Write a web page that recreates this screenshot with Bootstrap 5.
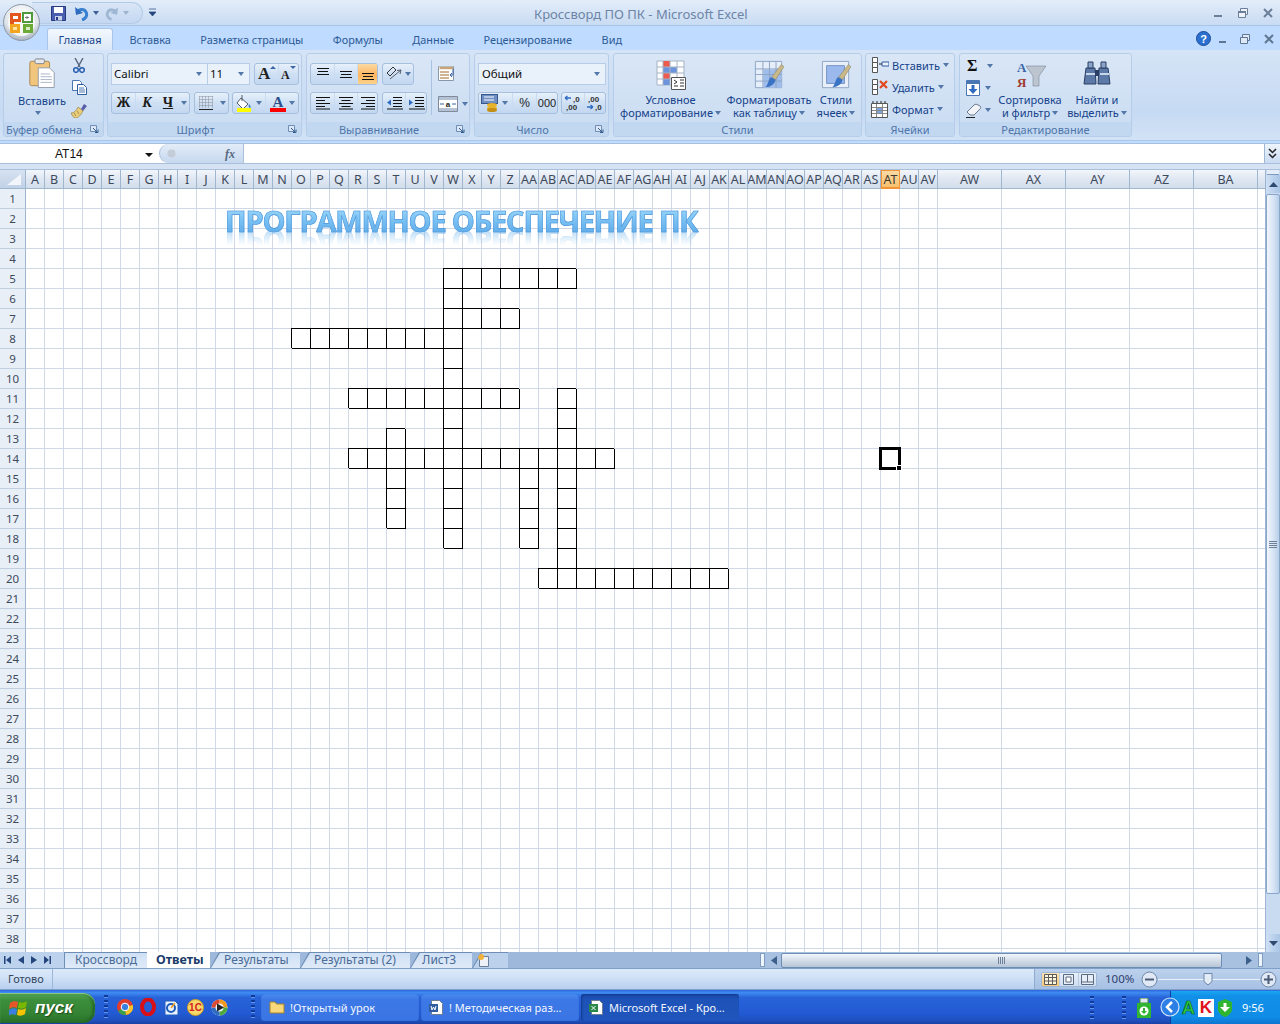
<!doctype html>
<html lang="ru">
<head>
<meta charset="utf-8">
<title>Кроссворд ПО ПК - Microsoft Excel</title>
<link href="https://cdn.jsdelivr.net/npm/bootstrap@5.3.0/dist/css/bootstrap.min.css" rel="stylesheet">
<style>
html,body{margin:0;height:1024px;overflow:hidden}
body{font:11px/13px "Noto Sans",sans-serif;color:#15428b;background:#bfdbff}
svg{display:block;flex:none}
.xl-app{width:1280px;height:1024px}
/* title */
.xl-title{height:26px;background:linear-gradient(#e3edfa,#d3e2f5 60%,#c9dcf3);border-bottom:1px solid #a9c5e8;padding-left:60px}
.qat{position:absolute;left:32px;top:2px;width:111px;height:22px;border:1px solid #b4cbe8;border-left:0;border-radius:0 12px 12px 0;background:linear-gradient(#d9e6f7,#c4d8f1)}
.xl-caption{position:absolute;left:534px;top:6px;color:#6c84a6;font-size:13px;line-height:16px;white-space:nowrap}
.win-c{position:absolute;left:1212px;top:7px;gap:13px;width:68px}
.win-d{position:absolute;left:1196px;top:5px}
.off-btn{position:absolute;left:3px;top:4px;width:37px;height:37px;z-index:5}
/* tabs */
.xl-tabs{height:24px;background:#bfdbff;gap:29.500px;padding-left:47px;padding-top:2px;font-size:10.9px}
.rtab{line-height:24px;height:22px;color:#2c5a96;white-space:nowrap}
.rtab-on{width:66px;margin-right:-13px;text-align:center;background:linear-gradient(#f3f8fe,#dbe8f7);border:1px solid #a9c5e8;border-bottom:0;border-radius:3px 3px 0 0;line-height:22px;color:#15428b}
/* ribbon */
.xl-ribbon{height:91px;background:linear-gradient(#d5e4f6,#c6daf3 70%,#d3e3f6);border-bottom:1px solid #a9c5e8;padding-top:3px}
.rg{height:84px;border:1px solid #b5cde9;border-radius:3px;background:linear-gradient(#d9e6f6,#c9dcf2);overflow:hidden;flex:none}
.rb{height:68px}
.rl{height:15px;line-height:15px;background:#c1d8f0;color:#4f75aa;text-align:center;position:relative;white-space:nowrap}
.rl-o{padding-right:18px}
.launch{position:absolute;right:4px;top:3px}
.g1{margin-left:3px;width:101px}.g2{margin-left:3px;width:195px}.g3{margin-left:4px;width:164px}.g4{margin-left:4px;width:135px}.g5{margin-left:4px;width:249px}.g6{margin-left:3px;width:90px}.g7{margin-left:4px;width:173px}
.tri{width:0;height:0;border:3px solid transparent;border-top:4px solid #5377a8;border-bottom:0;display:inline-block;flex:none}
.paste{width:62px;padding-left:11px;padding-top:4px}
.paste .lbl{margin-top:6px;margin-left:3px;white-space:nowrap}
.mini{margin-left:5px;padding-top:4px;gap:7px}
.rows{padding:9px 0 0 3px;gap:7px}
.rw{height:22px}
.combo{height:22px;background:#e9f1fb;border:1px solid #b6cce7;color:#111;font-size:11.5px;padding:0 5px 1px 2px}
.bgp{height:22px;border:1px solid #a6bfdd;border-radius:3px;background:linear-gradient(#e7f0fb,#cfe0f4 50%,#c2d7f0)}
.bgp>div{height:20px;border-left:1px solid #c9dbf0}
.bgp>div:first-child{border-left:0}
.b-on{background:linear-gradient(#fbd9a1,#fdb55f 55%,#fcd38c)}
.sepv{width:1px;height:55px;background:#a9c2df;margin:6px 6px 0 4px}
.big{padding-top:6px;text-align:center;white-space:nowrap}
.big .ic{height:30px;margin-bottom:3px}
.cl{padding:0 0 0 5px}
.cl>div{height:22px;gap:3px;white-space:nowrap}
.ed{padding:1px 0 0 6px;width:37px}
.ed>div{height:22px;gap:5px}
/* formula */
.xl-formula{height:21px;margin-top:2px;background:#fff;border-top:1px solid #a9c0dd;border-bottom:1px solid #a9c0dd}
.fname{width:159px;font:12px/19px "Liberation Sans",sans-serif;color:#111;padding:2px 6px 0 55px}
.fcap{width:85px;height:19px;background:linear-gradient(#e3ecf8,#c6d8ef);border:1px solid #a9c0dd;border-width:0 1px;border-radius:10px 0 0 10px;padding:0 8px 0 7px}
.fx{font:italic 700 12px/18px "Liberation Serif",serif;color:#56687e}
.fexp{width:16px;height:19px;background:linear-gradient(#eef4fc,#c9dbf2);border-left:1px solid #9eb6d3;color:#222}
.xl-gap{height:6px;background:#d4e2f4;border-bottom:1px solid #a9c0dd}
/* sheet */
.xl-sheet{height:782px}
.grid-wrap{width:1265px;position:relative;overflow:hidden;background:#fff}
.sgrid{display:grid;grid-template-columns:26px repeat(48,19px) repeat(5,64px) 8px;grid-template-rows:19px repeat(39,20px)}
.sgrid>div{box-sizing:border-box;min-width:0}
.cc{border-right:1px solid #d0d7e5;border-bottom:1px solid #d0d7e5}
.cb{border-right:1px solid #000;border-bottom:1px solid #000;box-shadow:-1px -1px 0 0 #000}
.hc,.hr{display:flex;align-items:center;justify-content:center;overflow:hidden;white-space:nowrap;color:#3d4a5c;font-size:12.5px;line-height:1}
.hr{font-size:11.5px}
.hc{background:linear-gradient(#f3f6fb,#dfe7f2 50%,#d3deec);border-right:1px solid #9eb6ce;border-bottom:1px solid #9eb6ce;padding-top:2px}
.hc span{flex:none}
.hr{background:#e9eff7;border-right:1px solid #9eb6ce;border-bottom:1px solid #c1cfe0}
.hc-on{background:linear-gradient(#f9dba6,#f6c06d);border:1px solid #f29536;border-bottom:2px solid #f29536;color:#3d3a30}
.corner{background:linear-gradient(#d7e2f1,#c1d1e6);border-right:1px solid #9eb6ce;border-bottom:1px solid #9eb6ce;position:relative}
.sel{position:relative}
.sel::before{content:"";position:absolute;left:-2px;top:-2px;right:-2px;bottom:-2px;border:3px solid #000}
.sel::after{content:"";position:absolute;right:-3px;bottom:-3px;width:6px;height:6px;background:#000;border:1px solid #fff}
.wa{position:absolute;left:225px;top:35px;font:700 29px/32px "Open Sans",sans-serif;letter-spacing:-1.19px;white-space:nowrap;color:transparent;background:linear-gradient(#a4dafa,#7cc3f4 45%,#58a6e6);-webkit-background-clip:text;background-clip:text;-webkit-text-stroke:.6px #4f97db;-webkit-box-reflect:below -12px linear-gradient(transparent 35%,rgba(255,255,255,.6))}
.vs{width:15px;background:#c9dbf1;border-left:1px solid #9eb6d3}
.vs-split{height:5px;background:#e4edf8;border-bottom:1px solid #7f9cc0;margin:0 1px}
.vs-btn{height:18px;background:linear-gradient(90deg,#cfe0f4,#a9c4e6)}
.vs-th{height:700px;border:1px solid #8aa6c9;border-radius:2px;background:linear-gradient(90deg,#f1f6fc,#d3e2f4 60%,#b8cfe9);margin-top:1px}
/* bottom tabs */
.xl-bar{height:16px;background:#9db8da;position:relative}
.tnav{width:64px;height:16px;background:#bdd2ec;gap:7px;padding-left:4px}
.stab{height:16px;line-height:16px;position:relative;isolation:isolate;color:#4a6b96;font-size:12px;white-space:nowrap;padding-left:14px;background:#6e8eb6;clip-path:polygon(0 100%,9px 0,100% 0,100% 100%)}
.stab::before{content:"";position:absolute;inset:1px 0 0 1px;z-index:-1;background:linear-gradient(#cfe0f5,#dfeaf8);clip-path:polygon(0 100%,9px 0,100% 0,100% 100%)}
.st1{width:83px;clip-path:none;padding-left:11px}
.st1::before{clip-path:none}
.st2{width:63px;font-weight:700;font-size:12.5px;color:#1b3b6b;padding-left:9px;clip-path:none;background:#fff}
.st2::before{background:#fff;clip-path:none}
.st3{width:90px}.st4{width:110px}.st5{width:62px;padding-left:12px}.st6{width:36px;padding:0;display:flex;align-items:center}
.st6::before{background:#bcd2ec}
.hs{margin-left:auto;width:520px;height:16px;background:#a9c1e1}
.hs-sp{width:5px;height:14px;background:#eef4fc;border:1px solid #7f9cc0;margin:0 3px 0 0}
.hs-th{width:441px;height:15px;border:1px solid #6d8db5;border-radius:2px;background:linear-gradient(#f1f5fa,#d3dde9 50%,#b7c5d6)}
/* status */
.xl-status{height:22px;background:linear-gradient(#dce9fa,#cfe0f6 45%,#b8d0f0);border-top:1px solid #7fa0c9;border-bottom:1px solid #7fa0c9;color:#34465e;padding-left:8px;line-height:20px}
.st-sep{width:1px;height:20px;background:#9eb8d8;margin-left:8px}
.st-right{margin-left:auto;width:246px;height:20px;background:linear-gradient(#bcd1ec,#a7c1e4);border-left:1px solid #8fabcf;padding-left:6px}
.vbtns{height:15px;width:56px;border:1px solid #9eb7d7;border-radius:2px;background:linear-gradient(#e7eff9,#cfdef1)}
.vbtns>div{flex:1;height:13px;border-left:1px solid #b7cbe3}
.vbtns>div:first-child{border:0;background:linear-gradient(#fbe3b6,#f8c878)}
.zm{width:36px;margin-left:8px;color:#2f3f6e;font-size:11.5px}
.zline{width:102px;height:1px;background:#eaf1fa;position:relative}
.zth{position:absolute;left:45px;top:-6px}
/* taskbar */
.xl-task{height:34px;color:#fff;background:linear-gradient(#2d66dd 0,#3f8cf3 8%,#2863d8 22%,#225ad4 70%,#1e4fbc 90%,#1941a5 100%);position:relative}
.startb{width:95px;height:30px;margin-top:2px;border-radius:0 12px 12px 0;background:linear-gradient(#56a556,#3c8e3c 25%,#338233 70%,#286f28);box-shadow:inset 0 1px 1px #8fce8f,inset -2px 0 3px #1f5f1f;padding-left:9px;gap:6px;font:italic 700 17px/30px "Liberation Sans",sans-serif;text-shadow:1px 1px 1px #1b4d1b}
.grip{width:4px;height:24px;margin:0 7px;background:repeating-linear-gradient(#0f3a9c 0 2px,#5f95ee 2px 3px,transparent 3px 5px)}
.ql{gap:7px;margin-left:2px}
.tb{width:158px;height:27px;margin-right:2px;padding-left:8px;gap:5px;border-radius:3px;background:linear-gradient(#4a8bf2,#3d79e6 20%,#3a75e3);box-shadow:inset 0 0 1px #1d4ab0;white-space:nowrap;overflow:hidden;font-size:11px;color:#f2f6ff}
.tb-on{background:linear-gradient(#1b49a8,#1e52b7 20%,#1f55bd);box-shadow:inset 1px 1px 2px #123a8a}
.tray{position:absolute;left:1170px;top:1px;width:110px;height:33px;background:linear-gradient(#19a6ef,#1290e8 15%,#0f8ce6 80%,#0e74d0);border-left:1px solid #0e3f9c;padding-left:8px;gap:3px}
.tA{font:700 18px/18px "Liberation Sans",sans-serif;color:#2ecc40;-webkit-text-stroke:.7px #0a5a18}
.tK{width:16px;height:18px;background:#fff;font:700 17px/18px "Liberation Sans",sans-serif;color:#e0101c;text-align:center}
.clk{margin-left:6px;font-size:11px;color:#fff}
.abs-usb{position:absolute;left:1136px;top:8px}
.abs-arrow{position:absolute;left:1160px;top:7px;z-index:2}
.g-tb1{position:absolute;left:1090px;top:6px;margin:0}.g-tb2{position:absolute;left:1122px;top:6px;margin:0}
</style>
</head>
<body>
<svg width="0" height="0" style="position:absolute">
 <defs>
  <symbol id="i-launch" viewBox="0 0 9 9"><path d="M.5.5h6v6h-6z" fill="#dbe7f6" stroke="#6f8fb7"/><path d="M3 3l4 4M5 7.500h3v-3" fill="none" stroke="#35598c"/></symbol>
  <symbol id="i-alt" viewBox="0 0 16 16"><path d="M2 2.500h12M3 5.500h10M2 8.500h12" stroke="#111" fill="none"/></symbol>
  <symbol id="i-alm" viewBox="0 0 16 16"><path d="M2 5.500h12M3 8.500h10M2 11.500h12" stroke="#111" fill="none"/></symbol>
  <symbol id="i-alb" viewBox="0 0 16 16"><path d="M2 7.500h12M3 10.500h10M2 13.500h12" stroke="#111" fill="none"/></symbol>
  <symbol id="i-ll" viewBox="0 0 16 14"><path d="M1 1.500h14M1 4.500h9M1 7.500h14M1 10.500h9M1 13h14" stroke="#111" fill="none"/></symbol>
  <symbol id="i-lc" viewBox="0 0 16 14"><path d="M1 1.500h14M3.500 4.500h9M1 7.500h14M3.500 10.500h9M1 13h14" stroke="#111" fill="none"/></symbol>
  <symbol id="i-lr" viewBox="0 0 16 14"><path d="M1 1.500h14M6 4.500h9M1 7.500h14M6 10.500h9M1 13h14" stroke="#111" fill="none"/></symbol>
  <symbol id="i-tblbrush" viewBox="0 0 32 32"><path d="M1.500 1.500h28v28h-28z" fill="#e6eefa" stroke="#8ba3c3"/><path d="M10 10h19.500v19.500H10z" fill="#9fbdec"/><path d="M1.500 9.500h28M1.500 15.500h28M1.500 22.500h28M9.500 1.500v28M16.500 1.500v28M23.500 1.500v28" stroke="#8ba3c3" fill="none"/><path d="M29 5l3 2-9 14-4-3z" fill="#c9b98a" stroke="#857650" stroke-width=".5"/><path d="M18 18l5 3c-1 5-6 8-11 8 3-2 3-8 6-11z" fill="#3b73c4"/></symbol>
  <symbol id="i-cellbrush" viewBox="0 0 32 32"><path d="M1.500 1.500h28v28h-28z" fill="#e8eff9" stroke="#8ba3c3"/><path d="M6 6h19v19H6z" fill="#9bb9ec" stroke="#6f8fc4"/><path d="M29 5l3 2-9 14-4-3z" fill="#c9b98a" stroke="#857650" stroke-width=".5"/><path d="M18 18l5 3c-1 5-6 8-11 8 3-2 3-8 6-11z" fill="#3b73c4"/></symbol>
 </defs>
</svg>

<div class="xl-app d-flex flex-column position-relative">
 <!-- title -->
 <div class="xl-title position-relative flex-none">
  <div class="qat d-flex align-items-center">
   <svg style="margin-left:19px" width="15" height="15" viewBox="0 0 15 15"><path d="M.5.5h14v14H.5z" fill="#4a5fb0" stroke="#27397f"/><path d="M3 1h9v6H3z" fill="#fff"/><path d="M4 10h7v4.500H4z" fill="#c9d4ea"/><path d="M5 11h2v3H5z" fill="#27397f"/></svg>
   <svg style="margin-left:9px" width="14" height="15" viewBox="0 0 14 15"><path d="M2 7c1-4 7-5 9-1 2 4-1 7-4 8" fill="none" stroke="#3a7fd0" stroke-width="3"/><path d="M0 1l1 8 7-2z" fill="#2f6cc0"/></svg>
   <span class="tri" style="margin-left:4px;border-top-color:#3c5f95"></span>
   <svg style="margin-left:6px" width="13" height="15" viewBox="0 0 14 15"><path d="M12 7C11 3 5 2 3 6c-2 4 1 7 4 8" fill="none" stroke="#9fb7d3" stroke-width="3"/><path d="M14 1l-1 8-7-2z" fill="#9fb7d3"/></svg>
   <span class="tri" style="margin-left:5px;border-top-color:#9fb3cd"></span>
  </div>
  <svg style="position:absolute;left:149px;top:8px" width="7" height="9" viewBox="0 0 7 9"><path d="M0 1h7M0 4l3.500 4L7 4z" fill="#24467d" stroke="#24467d" stroke-width=".7"/></svg>
  <div class="xl-caption">Кроссворд ПО ПК - Microsoft Excel</div>
  <div class="win-c d-flex align-items-center">
   <svg width="12" height="12" viewBox="0 0 12 12"><path d="M2 8h8v2H2z" fill="#6b7f99"/></svg>
   <svg width="12" height="12" viewBox="0 0 12 12"><path d="M3.500 1.500h7v6h-7z" fill="#eef3fa" stroke="#6b7f99"/><path d="M1.500 4.500h7v6h-7z" fill="#eef3fa" stroke="#6b7f99"/><path d="M1 4h8v2H1z" fill="#6b7f99"/></svg>
   <svg width="12" height="12" viewBox="0 0 12 12"><path d="M2 2l8 8M10 2l-8 8" stroke="#6b7f99" stroke-width="2"/></svg>
  </div>
 </div>
 <svg class="off-btn" viewBox="0 0 37 37"><defs><radialGradient id="og" cx=".5" cy=".3" r=".8"><stop offset="0" stop-color="#fff"/><stop offset=".6" stop-color="#dfe4ea"/><stop offset="1" stop-color="#8f9aa8"/></radialGradient></defs><circle cx="18.500" cy="18.500" r="18" fill="url(#og)" stroke="#8b97a6"/><circle cx="18.500" cy="18.500" r="13.500" fill="#f5f7f5"/><path d="M7 9h11v9H11v6H7z" fill="#e2571e"/><path d="M10 12h5v3h-5z" fill="#fff"/><path d="M20 9h9v9h-9z" fill="#fff" stroke="#4f9a3a" stroke-width="2"/><path d="M7 20h10v9H7z" fill="#f3a51f"/><path d="M10 23h4v3h-4z" fill="#fbe5a0"/><path d="M20 20h10v9H20z" fill="#6aaa35"/><path d="M23 23h4v3h-4z" fill="#d9eec7"/><path d="M24 12v3M22 13.500h4" stroke="#7a7a7a"/></svg>

 <!-- tabs -->
 <div class="xl-tabs d-flex flex-none position-relative">
  <div class="rtab rtab-on">Главная</div>
  <div class="rtab">Вставка</div>
  <div class="rtab">Разметка страницы</div>
  <div class="rtab">Формулы</div>
  <div class="rtab">Данные</div>
  <div class="rtab">Рецензирование</div>
  <div class="rtab">Вид</div>
  <div class="win-d d-flex align-items-center">
   <svg width="15" height="15" viewBox="0 0 15 15"><circle cx="7.500" cy="7.500" r="7" fill="#2b70d0" stroke="#1a4b9a"/><text x="7.500" y="11.500" text-anchor="middle" font-size="11" font-weight="700" fill="#fff" font-family="Liberation Sans">?</text></svg>
   <svg style="margin-left:6px" width="12" height="12" viewBox="0 0 12 12"><path d="M2 8h7v2H2z" fill="#5f7693"/></svg>
   <svg style="margin-left:10px" width="12" height="12" viewBox="0 0 12 12"><path d="M3.500 1.500h7v6h-7z" fill="#dfe9f6" stroke="#5f7693"/><path d="M1.500 4.500h7v6h-7z" fill="#dfe9f6" stroke="#5f7693"/></svg>
   <svg style="margin-left:12px" width="12" height="12" viewBox="0 0 12 12"><path d="M2 2l8 8M10 2l-8 8" stroke="#5f7693" stroke-width="2"/></svg>
  </div>
 </div>

 <!-- ribbon -->
 <div class="xl-ribbon d-flex flex-none">
  <section class="rg g1">
   <div class="rb d-flex">
    <div class="paste d-flex flex-column">
     <svg style="margin-left:14px" width="26" height="30" viewBox="0 0 27 32"><rect x=".5" y="3.500" width="21" height="26" rx="2" fill="#f1c57c" stroke="#a8864e"/><rect x="6" y="1" width="10" height="5" rx="1.500" fill="#e6e9ee" stroke="#7c818a"/><path d="M9.500 10.500h12l5 5v16h-17z" fill="#fff" stroke="#8f99a8"/><path d="M12 17h10M12 20h12M12 23h12M12 26h12" stroke="#a7b3c4"/></svg>
     <div class="lbl">Вставить</div>
     <span class="tri" style="margin:4px 0 0 20px"></span>
    </div>
    <div class="mini d-flex flex-column align-items-center">
     <svg width="14" height="15" viewBox="0 0 14 15"><path d="M3 0l5 9M11 0L6 9" stroke="#5a6a80" stroke-width="1.500"/><circle cx="4" cy="12" r="2.300" fill="none" stroke="#2a5fb0" stroke-width="1.500"/><circle cx="10" cy="12" r="2.300" fill="none" stroke="#2a5fb0" stroke-width="1.500"/></svg>
     <svg width="15" height="15" viewBox="0 0 15 15"><path d="M.5.500h7l2 2v8h-9z" fill="#fff" stroke="#4a76b4"/><path d="M5.500 4.500h6l3 3v7h-9z" fill="#fff" stroke="#2f5da0"/><path d="M7 8h5M7 10h6M7 12h6" stroke="#4a76b4"/></svg>
     <svg style="margin-top:1px" width="16" height="15" viewBox="0 0 16 15"><path d="M10 6l3-5 3 2-4 5z" fill="#5b5ea8"/><path d="M0 10c3 0 5-2 7-6l5 4c-2 4-5 7-7 7-3 0-4-3-5-5z" fill="#e9cd7a" stroke="#8a7438" stroke-width=".6"/><path d="M3 10l2 3M6 8l2 3" stroke="#8a7438" stroke-width=".7"/></svg>
    </div>
   </div>
   <div class="rl text-start" style="padding-left:2px">Буфер обмена<svg class="launch" width="9" height="9"><use href="#i-launch"/></svg></div>
  </section>

  <section class="rg g2">
   <div class="rb rows d-flex flex-column">
    <div class="rw d-flex">
     <div class="combo d-flex align-items-center justify-content-between" style="width:97px">Calibri<span class="tri"></span></div>
     <div class="combo d-flex align-items-center justify-content-between" style="width:42px;border-left:0">11<span class="tri"></span></div>
     <div class="bgp d-flex" style="margin-left:4px;width:45px">
      <div class="d-flex justify-content-center" style="width:23px"><svg width="18" height="18" viewBox="0 0 18 18"><text x="0" y="15" font-family="Liberation Serif" font-weight="700" font-size="17" fill="#222">A</text><path d="M12 5l3-3 3 3z" fill="#3a66a8"/></svg></div>
      <div class="d-flex justify-content-center" style="flex:1"><svg width="18" height="18" viewBox="0 0 18 18"><text x="1" y="15" font-family="Liberation Serif" font-weight="700" font-size="12" fill="#222">A</text><path d="M10 2l3 3 3-3z" fill="#3a66a8"/></svg></div>
     </div>
    </div>
    <div class="rw d-flex">
     <div class="bgp d-flex align-items-center" style="width:79px;font:700 14px/20px 'Liberation Serif',serif;color:#1a1a1a">
      <div class="d-flex align-items-center justify-content-center" style="width:23px">Ж</div>
      <div class="d-flex align-items-center justify-content-center fst-italic" style="width:23px">К</div>
      <div class="d-flex align-items-center justify-content-center text-decoration-underline" style="width:20px;border:0">Ч</div>
      <div class="d-flex align-items-center justify-content-center" style="flex:1;border:0"><span class="tri"></span></div>
     </div>
     <div class="bgp d-flex align-items-center" style="margin-left:4px;width:35px">
      <div class="d-flex align-items-center justify-content-center" style="width:22px"><svg width="16" height="16" viewBox="0 0 16 16"><path d="M1.500 1.500h13M1.500 4.500h13M1.500 7.500h13M1.500 10.500h13M1.500 1.500v11M4.500 1.500v11M7.500 1.500v11M10.500 1.500v11M14.500 1.500v11" stroke="#8a8f98" stroke-dasharray="1 1" fill="none"/><path d="M1 14.500h14" stroke="#222"/></svg></div>
      <div class="d-flex align-items-center justify-content-center" style="flex:1;border:0"><span class="tri"></span></div>
     </div>
     <div class="bgp d-flex align-items-center" style="margin-left:3px;width:67px">
      <div class="d-flex align-items-center" style="width:32px;gap:3px;padding-left:3px"><svg width="17" height="17" viewBox="0 0 17 17"><path d="M5 3l7 6-5 5-6-6z" fill="#fff" stroke="#555d6b"/><path d="M6 0v6" stroke="#555d6b"/><path d="M13 9c2 2 2 4 1 4s-2-2-1-4z" fill="#3a7fd0"/><path d="M1 13h14v4H1z" fill="#ffff00"/></svg><span class="tri"></span></div>
      <div class="d-flex align-items-center" style="flex:1;gap:3px;padding-left:4px"><svg width="16" height="17" viewBox="0 0 16 17"><text x="8" y="12" text-anchor="middle" font-family="Liberation Serif" font-weight="700" font-size="15" fill="#2b4f8a">A</text><path d="M0 13h16v4H0z" fill="#f00"/></svg><span class="tri"></span></div>
     </div>
    </div>
   </div>
   <div class="rl rl-o">Шрифт<svg class="launch" width="9" height="9"><use href="#i-launch"/></svg></div>
  </section>

  <section class="rg g3">
   <div class="rb d-flex">
    <div class="rows d-flex flex-column" style="width:120px">
     <div class="rw d-flex">
      <div class="bgp d-flex" style="width:68px">
       <div class="d-flex align-items-center justify-content-center" style="width:23px"><svg width="16" height="16"><use href="#i-alt"/></svg></div>
       <div class="d-flex align-items-center justify-content-center" style="width:23px"><svg width="16" height="16"><use href="#i-alm"/></svg></div>
       <div class="d-flex align-items-center justify-content-center b-on" style="flex:1"><svg width="16" height="16"><use href="#i-alb"/></svg></div>
      </div>
      <div class="bgp d-flex align-items-center justify-content-center" style="margin-left:4px;width:32px;gap:2px"><svg width="17" height="17" viewBox="0 0 17 17"><path d="M1 7l6-6 3 3-6 6z" fill="none" stroke="#333"/><path d="M4 13l11-9M15 4l-4 .5M15 4l-1 4" stroke="#555d6b" fill="none"/></svg><span class="tri"></span></div>
     </div>
     <div class="rw d-flex">
      <div class="bgp d-flex" style="width:68px">
       <div class="d-flex align-items-center justify-content-center" style="width:23px"><svg width="16" height="14"><use href="#i-ll"/></svg></div>
       <div class="d-flex align-items-center justify-content-center" style="width:23px"><svg width="16" height="14"><use href="#i-lc"/></svg></div>
       <div class="d-flex align-items-center justify-content-center" style="flex:1"><svg width="16" height="14"><use href="#i-lr"/></svg></div>
      </div>
      <div class="bgp d-flex" style="margin-left:4px;width:45px">
       <div class="d-flex align-items-center justify-content-center" style="width:22px"><svg width="17" height="14" viewBox="0 0 17 14"><path d="M7 1.500h9M7 4.500h9M7 7.500h9M7 10.500h9" stroke="#111"/><path d="M5 3.500L1 6.500l4 3z" fill="#2f6cc0"/><path d="M1 13h16" stroke="#111"/></svg></div>
       <div class="d-flex align-items-center justify-content-center" style="flex:1"><svg width="17" height="14" viewBox="0 0 17 14"><path d="M7 1.500h9M7 4.500h9M7 7.500h9M7 10.500h9" stroke="#111"/><path d="M1 3.500l4 3-4 3z" fill="#2f6cc0"/><path d="M1 13h16" stroke="#111"/></svg></div>
      </div>
     </div>
    </div>
    <div class="sepv"></div>
    <div class="d-flex flex-column" style="padding-top:11px;gap:13px">
     <svg width="18" height="18" viewBox="0 0 18 18"><path d="M.5 1.500h15v14H.5z" fill="#fff" stroke="#8a97a8"/><path d="M1 1.500h14v3H1z" fill="#eadfc8"/><path d="M2 3h13M2 7h9M2 10h9M2 13h9" stroke="#a06a2a"/><path d="M15 4v6h-3M14 8l-2 2 2 2" stroke="#3a66a8" fill="none"/></svg>
     <div class="d-flex align-items-center" style="gap:4px"><svg width="20" height="16" viewBox="0 0 20 16"><path d="M.5 .5h19v15H.5z" fill="#fff" stroke="#7f8b9c"/><path d="M1 1h18v3H1zM1 12h18v3H1z" fill="#b5c2d3"/><text x="10" y="11" text-anchor="middle" font-size="8" font-weight="700" fill="#222" font-family="Liberation Sans">a</text><path d="M2 8h4M18 8h-4" stroke="#3a66a8"/></svg><span class="tri"></span></div>
    </div>
   </div>
   <div class="rl rl-o">Выравнивание<svg class="launch" width="9" height="9"><use href="#i-launch"/></svg></div>
  </section>

  <section class="rg g4">
   <div class="rb rows d-flex flex-column">
    <div class="rw"><div class="combo d-flex align-items-center justify-content-between" style="width:128px;padding-left:3px;font-size:11.5px">Общий<span class="tri"></span></div></div>
    <div class="rw d-flex">
     <div class="bgp d-flex align-items-center" style="width:80px">
      <div class="d-flex align-items-center" style="width:33px;gap:3px;padding-left:2px"><svg width="18" height="18" viewBox="0 0 18 18"><rect x=".5" y=".5" width="16" height="9" fill="#6f8fc4" stroke="#35598c"/><path d="M3 3h10M3 6h10" stroke="#fff"/><ellipse cx="11" cy="11" rx="5" ry="2" fill="#e8b22a"/><ellipse cx="11" cy="14" rx="5" ry="2" fill="#e8b22a"/><ellipse cx="11" cy="16" rx="5" ry="2" fill="#c48f14"/></svg><span class="tri"></span></div>
      <div class="d-flex align-items-center justify-content-center" style="width:24px;font:12px/20px 'Liberation Sans',sans-serif;color:#222">%</div>
      <div class="d-flex align-items-center justify-content-center" style="flex:1;font:11px/20px 'Liberation Sans',sans-serif;color:#222">000</div>
     </div>
     <div class="bgp d-flex align-items-center" style="margin-left:3px;width:45px">
      <div class="d-flex align-items-center justify-content-center" style="width:22px"><svg width="20" height="18" viewBox="0 0 20 18"><path d="M8 4H2M2 4l2.500-2M2 4l2.500 2" stroke="#2f6cc0" fill="none" stroke-width="1.300"/><text x="10" y="8" font-size="8" font-weight="700" fill="#333" font-family="Liberation Sans">,0</text><text x="3" y="16" font-size="8" font-weight="700" fill="#333" font-family="Liberation Sans">,00</text></svg></div>
      <div class="d-flex align-items-center justify-content-center" style="flex:1"><svg width="20" height="18" viewBox="0 0 20 18"><text x="3" y="8" font-size="8" font-weight="700" fill="#333" font-family="Liberation Sans">,00</text><path d="M2 13h6M8 13l-2.500-2M8 13l-2.500 2" stroke="#2f6cc0" fill="none" stroke-width="1.300"/><text x="10" y="16" font-size="8" font-weight="700" fill="#333" font-family="Liberation Sans">,0</text></svg></div>
     </div>
    </div>
   </div>
   <div class="rl rl-o">Число<svg class="launch" width="9" height="9"><use href="#i-launch"/></svg></div>
  </section>

  <section class="rg g5">
   <div class="rb d-flex" style="padding-left:5px">
    <div class="big" style="width:103px">
     <div class="ic d-flex justify-content-center"><svg width="30" height="30" viewBox="0 0 30 30"><path d="M1 1h27v24H1z" fill="#fff" stroke="#a5b2c4"/><path d="M7 1h7v6H7zM7 13h7v6H7z" fill="#ec5b4c"/><path d="M7 7h14v6H7zM7 19h7v6H7z" fill="#6c94dc"/><path d="M1 7h27M1 13h27M1 19h27M7 1v24M14 1v24M21 1v24" stroke="#a5b2c4" fill="none"/><path d="M15.500 17.500h14v12h-14z" fill="#fff" stroke="#555"/><path d="M18 20l3 2-3 2M18 26h4M24 20h4M24 23h4M24 26h4" stroke="#333" fill="none"/></svg></div>
     <div>Условное</div>
     <div class="d-flex align-items-center justify-content-center" style="gap:2px">форматирование<span class="tri"></span></div>
    </div>
    <div class="big" style="width:94px">
     <div class="ic d-flex justify-content-center"><svg width="32" height="30" viewBox="0 0 32 32"><use href="#i-tblbrush"/></svg></div>
     <div>Форматировать</div>
     <div class="d-flex align-items-center justify-content-center" style="gap:2px">как таблицу<span class="tri"></span></div>
    </div>
    <div class="big" style="width:40px">
     <div class="ic d-flex justify-content-center"><svg width="32" height="30" viewBox="0 0 32 32"><use href="#i-cellbrush"/></svg></div>
     <div>Стили</div>
     <div class="d-flex align-items-center justify-content-center" style="gap:2px">ячеек<span class="tri"></span></div>
    </div>
   </div>
   <div class="rl">Стили</div>
  </section>

  <section class="rg g6">
   <div class="rb cl d-flex flex-column">
    <div class="d-flex align-items-center"><svg width="18" height="17" viewBox="0 0 18 17"><path d="M1.500 .5h5v5h-5zM1.500 5.500h5v5h-5zM1.500 10.500h5v5h-5z" fill="#fff" stroke="#555"/><path d="M8 7h3" stroke="#222"/><path d="M11 5h7v4h-7z" fill="#eaf1fb" stroke="#2f5da0"/></svg><span>Вставить</span><span class="tri"></span></div>
    <div class="d-flex align-items-center"><svg width="18" height="17" viewBox="0 0 18 17"><path d="M1.500 .5h5v5h-5zM1.500 5.500h5v5h-5zM1.500 10.500h5v5h-5z" fill="#fff" stroke="#555"/><path d="M9 2l7 7M16 2l-7 7" stroke="#e2481f" stroke-width="2.200"/></svg><span>Удалить</span><span class="tri"></span></div>
    <div class="d-flex align-items-center"><svg width="18" height="17" viewBox="0 0 18 17"><path d="M.5 2.500h16v14H.5z" fill="#fff" stroke="#555"/><path d="M6 6h6v6H6z" fill="#7fa4e2"/><path d="M1 6.500h15M1 9.500h15M1 12.500h15M5.500 3v13M11.500 3v13" stroke="#888" fill="none"/><path d="M2 0v2M6 0v2M10 0v2M14 0v2" stroke="#222"/></svg><span>Формат</span><span class="tri"></span></div>
   </div>
   <div class="rl">Ячейки</div>
  </section>

  <section class="rg g7">
   <div class="rb d-flex">
    <div class="ed d-flex flex-column">
     <div class="d-flex align-items-center"><span style="font:700 16px/16px 'Liberation Serif',serif;color:#111;width:13px;padding-left:1px">Σ</span><span class="tri" style="margin-left:3px"></span></div>
     <div class="d-flex align-items-center"><svg width="14" height="16" viewBox="0 0 14 16"><path d="M.5 .5h13v15H.5z" fill="#fff" stroke="#4a76b4"/><path d="M1 1h12v3H1z" fill="#4a76b4"/><path d="M5.500 5h3v4h3L7 14 2.500 9h3z" fill="#2f6cc0"/></svg><span class="tri"></span></div>
     <div class="d-flex align-items-center"><svg width="16" height="15" viewBox="0 0 16 15"><path d="M1 9l7-7c1-1 3-1 4 0l2 1c1 1 1 2 0 3l-6 6H4z" fill="#f2f4f8" stroke="#6b7a8f"/><path d="M0 14.500h9" stroke="#222"/></svg><span class="tri" style="margin-left:-2px"></span></div>
    </div>
    <div class="big" style="width:66px">
     <div class="ic d-flex justify-content-center"><svg width="32" height="30" viewBox="0 0 32 30"><path d="M12 6h20l-7 10v10h-6V16z" fill="#bcc5cf" stroke="#7a8694" stroke-width=".6"/><text x="3" y="12" font-family="Liberation Serif" font-weight="700" font-size="13" fill="#3a66a8">A</text><text x="3" y="27" font-family="Liberation Serif" font-weight="700" font-size="13" fill="#a03a2e">Я</text></svg></div>
     <div>Сортировка</div>
     <div class="d-flex align-items-center justify-content-center" style="gap:2px">и фильтр<span class="tri"></span></div>
    </div>
    <div class="big" style="width:60px;margin-left:4px">
     <div class="ic d-flex justify-content-center"><svg width="28" height="26" viewBox="0 0 28 26"><path d="M3 8h9l1 16H1z" fill="#5c79a8" stroke="#2a3f63"/><path d="M16 8h9l2 16H15z" fill="#5c79a8" stroke="#2a3f63"/><path d="M5 2h5v6H5zM18 2h5v6h-5z" fill="#8aa4c9" stroke="#2a3f63"/><path d="M12 10h4v6h-4z" fill="#2a3f63"/><path d="M3 14h9M17 14h9" stroke="#c8d6ea" stroke-width="2"/></svg></div>
     <div>Найти и</div>
     <div class="d-flex align-items-center justify-content-center" style="gap:2px">выделить<span class="tri"></span></div>
    </div>
   </div>
   <div class="rl">Редактирование</div>
  </section>
 </div>

 <!-- formula bar -->
 <div class="xl-formula d-flex align-items-center flex-none">
  <div class="fname d-flex align-items-center justify-content-between">AT14<span class="tri" style="border-width:4px 4px 0;border-top-color:#111"></span></div>
  <div class="fcap d-flex align-items-center justify-content-between"><svg width="9" height="9"><circle cx="4.500" cy="4.500" r="4" fill="#c3ccd8"/></svg><span class="fx">fx</span></div>
  <div class="flex-grow-1"></div>
  <div class="fexp d-flex align-items-center justify-content-center"><svg width="9" height="11" viewBox="0 0 9 11"><path d="M1 1l3.500 3.500L8 1M1 6l3.500 3.500L8 6" stroke="#222" stroke-width="1.500" fill="none"/></svg></div>
 </div>
 <div class="xl-gap flex-none"></div>

 <!-- sheet -->
 <div class="xl-sheet d-flex flex-none">
  <div class="grid-wrap">
   <div class="sgrid" id="sheet"></div>
   <div class="wa">ПРОГРАММНОЕ ОБЕСПЕЧЕНИЕ ПК</div>
  </div>
  <div class="vs d-flex flex-column">
   <div class="vs-split"></div>
   <div class="vs-btn d-flex align-items-center justify-content-center"><svg width="9" height="5"><path d="M0 5l4.500-5L9 5z" fill="#2f4a70"/></svg></div>
   <div class="vs-th d-flex align-items-center justify-content-center"><svg width="8" height="7"><path d="M0 .5h8M0 2.500h8M0 4.500h8M0 6.500h8" stroke="#6e8199"/></svg></div>
   <div class="flex-grow-1"></div>
   <div class="vs-btn d-flex align-items-center justify-content-center"><svg width="9" height="5"><path d="M0 0l4.500 5L9 0z" fill="#2f4a70"/></svg></div>
  </div>
 </div>

 <!-- sheet tabs -->
 <div class="xl-bar d-flex flex-none">
  <div class="tnav d-flex align-items-center">
   <svg width="7" height="8" viewBox="0 0 7 8"><path d="M0 0h1.500v8H0zM7 0v8L2 4z" fill="#24467d"/></svg>
   <svg width="6" height="8" viewBox="0 0 6 8"><path d="M6 0v8L0 4z" fill="#24467d"/></svg>
   <svg width="6" height="8" viewBox="0 0 6 8"><path d="M0 0v8l6-4z" fill="#24467d"/></svg>
   <svg width="7" height="8" viewBox="0 0 7 8"><path d="M0 0v8l5-4zM5.500 0H7v8H5.500z" fill="#24467d"/></svg>
  </div>
  <div class="stab st1">Кроссворд</div>
  <div class="stab st2">Ответы</div>
  <div class="stab st3">Результаты</div>
  <div class="stab st4">Результаты (2)</div>
  <div class="stab st5">Лист3</div>
  <div class="stab st6"><svg style="margin-left:5px" width="14" height="13" viewBox="0 0 14 13"><path d="M2.500 2.500h9v10h-9z" fill="#eef2f7" stroke="#6b7f99"/><circle cx="4" cy="3" r="3" fill="#f0b13a"/></svg></div>
  <div class="hs d-flex align-items-center">
   <div class="hs-sp"></div>
   <svg style="margin:0 4px 0 3px" width="6" height="9"><path d="M6 0v9L0 4.500z" fill="#3c5f8c"/></svg>
   <div class="hs-th d-flex align-items-center justify-content-center"><svg width="8" height="7"><path d="M.5 0v7M2.500 0v7M4.500 0v7M6.500 0v7" stroke="#6e8199"/></svg></div>
   <svg style="margin:0 0 0 24px" width="6" height="9"><path d="M0 0v9l6-4.500z" fill="#3c5f8c"/></svg>
   <div class="hs-sp" style="margin-left:6px"></div>
  </div>
 </div>

 <!-- status -->
 <div class="xl-status d-flex align-items-center flex-none">
  <span>Готово</span><div class="st-sep"></div>
  <div class="st-right d-flex align-items-center">
   <div class="vbtns d-flex align-items-center">
    <div class="d-flex align-items-center justify-content-center"><svg width="13" height="11" viewBox="0 0 13 11"><path d="M.5.5h12v10H.5zM.5 3.500h12M.5 7h12M4.500.5v10M8.500.5v10" stroke="#5a5a5a" fill="#fff6e0"/></svg></div>
    <div class="d-flex align-items-center justify-content-center"><svg width="11" height="11" viewBox="0 0 11 11"><path d="M.5.5h10v10H.5z" fill="#e6edf6" stroke="#5a6a80"/><path d="M3 3h5v5H3z" fill="#fff" stroke="#5a6a80"/></svg></div>
    <div class="d-flex align-items-center justify-content-center"><svg width="13" height="11" viewBox="0 0 13 11"><path d="M.5.5h12v10H.5z" fill="#e6edf6" stroke="#5a6a80"/><path d="M6.500 1v7M1 8h11" stroke="#5a6a80"/></svg></div>
   </div>
   <div class="zm">100%</div>
   <svg width="17" height="17" viewBox="0 0 17 17"><circle cx="8.500" cy="8.500" r="7.500" fill="#dfe8f4" stroke="#6f87a8"/><path d="M4 7.500h9v2H4z" fill="#4a5b74"/></svg>
   <div class="zline"><svg class="zth" width="10" height="13" viewBox="0 0 10 13"><path d="M1 .5h8v8L5 12 1 8.500z" fill="#e4ecf7" stroke="#6f87a8"/></svg></div>
   <svg width="17" height="17" viewBox="0 0 17 17"><circle cx="8.500" cy="8.500" r="7.500" fill="#dfe8f4" stroke="#6f87a8"/><path d="M4 7.500h9v2H4zM7.500 4h2v9h-2z" fill="#4a5b74"/></svg>
  </div>
 </div>

 <!-- taskbar -->
 <div class="xl-task d-flex align-items-center flex-none">
  <div class="startb d-flex align-items-center">
   <svg width="20" height="20" viewBox="0 0 20 20"><path d="M1 5c3-2 5-2 8-1l-1 6c-3-1-5-1-8 1z" fill="#e8552a"/><path d="M10 4c3 1 5 1 8-1l-1 6c-3 2-5 2-8 1z" fill="#7ab800"/><path d="M0 12c3-2 5-2 8-1l-1 6c-3-1-5-1-8 1z" fill="#3a7fe0"/><path d="M9 11c3 1 5 1 8-1l-1 6c-3 2-5 2-8 1z" fill="#f7c300"/></svg>
   <span>пуск</span>
  </div>
  <div class="grip" style="margin-left:9px"></div>
  <div class="ql d-flex align-items-center">
   <svg width="16" height="16" viewBox="0 0 16 16"><circle cx="8" cy="8" r="8" fill="#e23c2e"/><path d="M8 8L1 12A8 8 0 0 0 8 16h1z" fill="#3aa14a"/><path d="M8 8l1 8A8 8 0 0 0 15.800 6z" fill="#f4c52b"/><circle cx="8" cy="8" r="3.800" fill="#3a7fe0" stroke="#fff"/></svg>
   <svg width="16" height="18" viewBox="0 0 16 18"><ellipse cx="8" cy="9" rx="6" ry="7.500" fill="none" stroke="#d80f17" stroke-width="4"/></svg>
   <svg width="16" height="17" viewBox="0 0 16 17"><path d="M2 2h10l3 3v11H2z" fill="#eaf3fd" stroke="#1e5cbb"/><circle cx="8" cy="9" r="4" fill="none" stroke="#1e5cbb" stroke-width="2"/><path d="M8 9l4-5" stroke="#f59c1a" stroke-width="1.500"/></svg>
   <svg style="margin-left:1px" width="17" height="17" viewBox="0 0 17 17"><circle cx="8.500" cy="8.500" r="8" fill="#f8d86a" stroke="#c99a1e"/><text x="8.500" y="12" text-anchor="middle" font-size="10" font-weight="700" fill="#d6201f" font-family="Liberation Sans">1С</text></svg>
   <svg width="17" height="17" viewBox="0 0 17 17"><circle cx="8.500" cy="8.500" r="8" fill="#eef3fa"/><path d="M8.500.5a8 8 0 0 1 8 8h-4a4 4 0 0 0-4-4z" fill="#f39a1e"/><path d="M16.500 8.500a8 8 0 0 1-8 8v-4a4 4 0 0 0 4-4z" fill="#4ea83c"/><path d="M8.500 16.500a8 8 0 0 1-8-8h4a4 4 0 0 0 4 4z" fill="#2f6cc0"/><path d="M.5 8.500a8 8 0 0 1 8-8v4a4 4 0 0 0-4 4z" fill="#d94a30"/><path d="M6 4.500l7 4-7 4z" fill="#222"/></svg>
  </div>
  <div class="grip" style="margin:0 6px 0 23px"></div>
  <div class="tb d-flex align-items-center"><svg width="16" height="14" viewBox="0 0 16 14"><path d="M1 2h5l1.500 2H15v9H1z" fill="#f7d97c" stroke="#a9832a"/></svg><span>!Открытый урок</span></div>
  <div class="tb d-flex align-items-center"><svg width="15" height="16" viewBox="0 0 15 16"><path d="M2.500 1.500h8l3 3v11h-11z" fill="#fff" stroke="#6d7d92"/><path d="M0 5h9v8H0z" fill="#2f5da0"/><path d="M2 7l1 4 1.500-3L6 11l1-4" stroke="#fff" fill="none"/></svg><span>! Методическая раз…</span></div>
  <div class="tb tb-on d-flex align-items-center"><svg width="15" height="16" viewBox="0 0 15 16"><path d="M2.500 1.500h8l3 3v11h-11z" fill="#fff" stroke="#6d7d92"/><path d="M0 5h9v8H0z" fill="#2a8a4a"/><path d="M2.500 7l4 4M6.500 7l-4 4" stroke="#fff"/></svg><span>Microsoft Excel - Кро…</span></div>
  <div class="grip g-tb1"></div>
  <div class="grip g-tb2"></div>
  <svg class="abs-usb" width="16" height="20" viewBox="0 0 16 20"><path d="M4 0h8v5H4z" fill="#dfe8f4" stroke="#4a8a3a"/><path d="M1 5h14v15H1z" fill="#2fb52f"/><circle cx="8" cy="13" r="4.500" fill="#fff"/><path d="M7 10h2v3h2l-3 3-3-3h2z" fill="#2fb52f"/></svg>
  <svg class="abs-arrow" width="20" height="20" viewBox="0 0 20 20"><circle cx="10" cy="10" r="9" fill="#2b7fe6" stroke="#cfe3fb" stroke-width="1.200"/><path d="M12 5l-5 5 5 5" stroke="#fff" stroke-width="2.500" fill="none"/></svg>
  <div class="tray d-flex align-items-center">
   <span class="tA" style="margin-left:3px">A</span>
   <div class="tK">K</div>
   <svg width="16" height="18" viewBox="0 0 16 18"><path d="M8 0l7 3v7c0 4-4 7-7 8-3-1-7-4-7-8V3z" fill="#2fb52f"/><path d="M6.500 4h3v4h3.500L8 13 3 8h3.500z" fill="#fff"/></svg>
   <span class="clk">9:56</span>
  </div>
 </div>
</div>

<script>
(function(){
  var s=document.getElementById('sheet'),h='';
  function col(i){return i<26?String.fromCharCode(65+i):String.fromCharCode(64+Math.floor(i/26))+String.fromCharCode(65+i%26);}
  var cross={5:[[22,28]],6:[[22,22]],7:[[22,25]],8:[[14,22]],9:[[22,22]],10:[[22,22]],11:[[17,25],[28,28]],12:[[22,22],[28,28]],13:[[19,19],[22,22],[28,28]],14:[[17,30]],15:[[19,19],[22,22],[26,26],[28,28]],16:[[19,19],[22,22],[26,26],[28,28]],17:[[19,19],[22,22],[26,26],[28,28]],18:[[22,22],[26,26],[28,28]],19:[[28,28]],20:[[27,36]]};
  function on(r,c){return (cross[r]||[]).some(function(p){return c>=p[0]&&c<=p[1];});}
  h+='<div class="corner"><svg width="25" height="18" viewBox="0 0 25 18"><path d="M21 4v11H7z" fill="#f2f6fb"/></svg></div>';
  for(var c=0;c<53;c++){h+='<div class="hc'+(c===45?' hc-on':'')+'"><span>'+col(c)+'</span></div>';}
  h+='<div class="hc"></div>';
  for(var r=1;r<=39;r++){
    h+='<div class="hr">'+(r<39?r:'')+'</div>';
    for(c=0;c<=53;c++){
      var k=on(r,c)?'cb':'cc';
      if(r===14&&c===45)k+=' sel';
      h+='<div class="'+k+'"></div>';
    }
  }
  s.innerHTML=h;
})();
</script>
</body>
</html>
